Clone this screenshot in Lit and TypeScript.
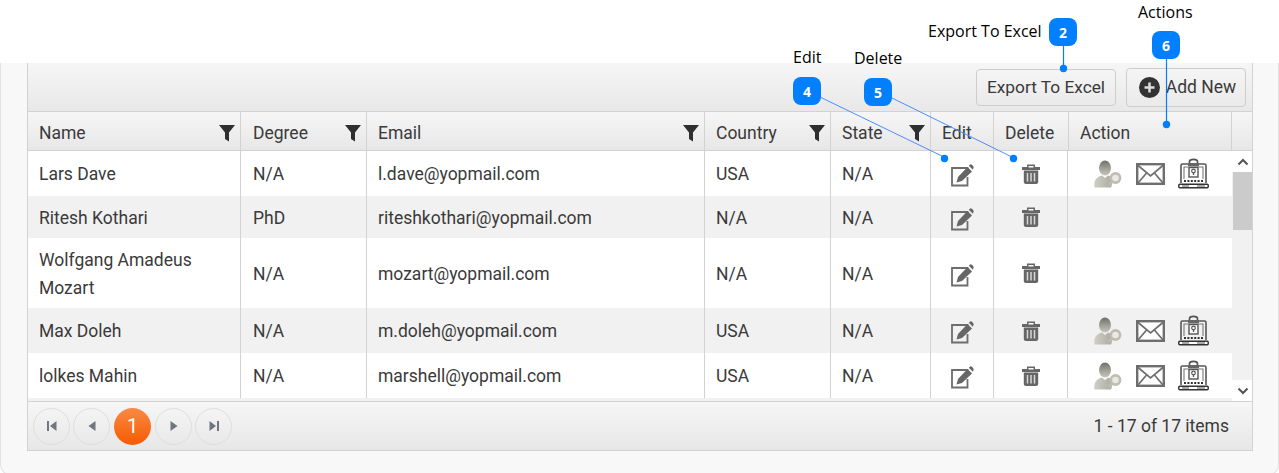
import { LitElement, html, css, svg } from "lit";
import { customElement } from "lit/decorators.js";

const funnel = html`<svg class="funnel" width="16" height="17" viewBox="0 0 16 17"><path d="M0 0H16L10 7.500V16.500L6 14V7.500Z" fill="#2f2f2f"/></svg>`;
const edit = html`<svg class="pen" width="24" height="23" viewBox="0 0 24 23"><path d="M17.500 8V4H2V21.500H17.500V13" fill="none" stroke="#6d6d6d" stroke-width="1.800"/><path d="M6.500 18.500L8 13L17.500 3L22 7.500L12 17Z" fill="#666"/><path d="M18.800 1.800L20.500 .3C21.500 0 24 2.500 23.600 3.800L22.800 5.800Z" fill="#666"/></svg>`;
const trash = html`<svg width="20" height="20" viewBox="0 0 20 20"><path d="M1 3H19V6H1ZM6 3V.5H14V3" fill="#666"/><path d="M7.500 2V3.500H12.500V2Z" fill="#fff"/><path d="M2.800 6.500H17.200V18C17.200 19 16.200 20 15.200 20H4.800C3.800 20 2.800 19 2.800 18Z" fill="#666"/><path d="M6.500 9V17.500M10 9V17.500M13.500 9V17.500" stroke="#d8d8d8" stroke-width="1.500"/></svg>`;
const person = html`<svg width="29" height="28" viewBox="0 0 29 28"><defs><linearGradient id="pg" x1="0" y1="0" x2="0" y2="1"><stop offset="0" stop-color="#6f6f68"/><stop offset=".55" stop-color="#a2a298"/><stop offset="1" stop-color="#c6c6bc"/></linearGradient><linearGradient id="pb" x1="0" y1="0" x2="1" y2="0"><stop offset="0" stop-color="#cfcfc6"/><stop offset="1" stop-color="#a9a99e"/></linearGradient></defs><ellipse cx="11" cy="8" rx="6" ry="7.500" fill="url(#pg)"/><path d="M0.500 27.500C-.5 21 2 17 8 15.500L11 18L14 15.500C16 16 18 17.500 19 20C17.500 22 18.500 25 17 27.500Z" fill="url(#pb)"/><circle cx="21.500" cy="18" r="4.600" fill="#e9e9e4" stroke="#bdbdb2" stroke-width="2.600"/><path d="M18 21.500L15 25" stroke="#bdbdb2" stroke-width="3"/></svg>`;
const mail = html`<svg width="29" height="22" viewBox="0 0 29 22"><rect x="1.200" y="1.200" width="26.600" height="19.600" fill="#fff" stroke="#6e6e6e" stroke-width="2.400"/><path d="M1.500 2L14.500 13L27.500 2M2 20L11 9.500M27 20L18 9.500" fill="none" stroke="#6e6e6e" stroke-width="1.700"/></svg>`;
const lock = html`<svg width="31" height="31" viewBox="0 0 31 31"><path d="M3 25V7.500C3 6.500 3.500 6 4.500 6H26.500C27.500 6 28 6.500 28 7.500V25" fill="none" stroke="#555" stroke-width="1.600"/><path d="M6 21V9H25V21" fill="none" stroke="#777" stroke-width="1.100"/><rect x="10" y="5" width="11" height="8" fill="#fff"/><path d="M11.500 6V3.800C11.500 .5 19.500 .5 19.500 3.800V6" fill="none" stroke="#555" stroke-width="1.700"/><rect x="10" y="5" width="11" height="3.500" fill="#666"/><rect x="11" y="9.500" width="9" height="9.500" fill="#fff" stroke="#555" stroke-width="1.400"/><circle cx="15.500" cy="13" r="1.800" fill="none" stroke="#555" stroke-width="1.200"/><path d="M15.500 14.500V17" stroke="#555" stroke-width="1.300"/><path d="M6 23H25" stroke="#333" stroke-width="2" stroke-dasharray="2 1.400"/><rect x="0.800" y="26.300" width="29.400" height="3.400" rx="1" fill="#fff" stroke="#333" stroke-width="1.500"/><path d="M4 28H11M19 28H27" stroke="#555"/></svg>`;
const chevUp = html`<svg width="12" height="8" viewBox="0 0 12 8"><path d="M1.500 6.500L6 2L10.500 6.500" fill="none" stroke="#555" stroke-width="2"/></svg>`;
const chevDown = html`<svg width="12" height="8" viewBox="0 0 12 8"><path d="M1.500 1.500L6 6L10.500 1.500" fill="none" stroke="#555" stroke-width="2"/></svg>`;

const first = html`<svg width="10" height="10" viewBox="0 0 10 10"><path d="M0 0H2V10H0ZM9.500 0V10L3 5Z" fill="#6f7680"/></svg>`;
const prev = html`<svg width="8" height="10" viewBox="0 0 8 10"><path d="M7.500 0V10L0.500 5Z" fill="#6f7680"/></svg>`;
const next = html`<svg width="8" height="10" viewBox="0 0 8 10"><path d="M.500 0V10L7.500 5Z" fill="#6f7680"/></svg>`;
const last = html`<svg width="10" height="10" viewBox="0 0 10 10"><path d="M8 0H10V10H8ZM.500 0V10L7 5Z" fill="#6f7680"/></svg>`;

type Row = { name: string; degree: string; email: string; country: string; state: string; actions: boolean };
const rows: Row[] = [
  { name: "Lars Dave", degree: "N/A", email: "l.dave@yopmail.com", country: "USA", state: "N/A", actions: true },
  { name: "Ritesh Kothari", degree: "PhD", email: "riteshkothari@yopmail.com", country: "N/A", state: "N/A", actions: false },
  { name: "Wolfgang Amadeus Mozart", degree: "N/A", email: "mozart@yopmail.com", country: "N/A", state: "N/A", actions: false },
  { name: "Max Doleh", degree: "N/A", email: "m.doleh@yopmail.com", country: "USA", state: "N/A", actions: true },
  { name: "lolkes Mahin", degree: "N/A", email: "marshell@yopmail.com", country: "USA", state: "N/A", actions: true },
];

const overlay = svg`
  <g stroke="#4f8dff" fill="none">
    <path d="M821 97.500L946 158" />
    <path d="M892 98L1014 158" />
  </g>
  <g stroke="#007fff" stroke-width="1.200" fill="none">
    <path d="M1063.500 45V69" />
    <path d="M1166.500 58V124" />
  </g>
  <g fill="#007fff">
    <circle cx="1063.500" cy="68.500" r="3.700" />
    <circle cx="1166.500" cy="124.500" r="3.700" />
    <circle cx="944.500" cy="158.500" r="3.700" />
    <circle cx="1013.500" cy="158.500" r="3.700" />
  </g>`;

@customElement("app-root")
export class AppRoot extends LitElement {
  static styles = css`
    :host { display: block; position: relative; height: 473px; overflow: hidden; background: #fff;
      font-family: Roboto, "Liberation Sans", sans-serif; font-size: 17.500px; color: #3a3a3a; }
    * { box-sizing: border-box; }
    svg { display: block; }
    .band { height: 63px; }
    .card { height: 412px; background: #f8f8f8; border: 1px solid #e2e2e2; border-top: 0;
      border-radius: 0 0 10px 10px; padding: 0 25px 0 26px; }
    .grid { width: 1226px; height: 388px; border: 1px solid #d2d2d2; border-top: 0; background: #fff; display: flex; flex-direction: column; }
    .toolbar { height: 49px; flex: none; display: flex; justify-content: flex-end; align-items: center; gap: 10px; padding-right: 6px;
      background: linear-gradient(#f6f6f6, #e9e8e8); border-bottom: 1px solid #d2d2d2; }
    .btn { display: flex; align-items: center; justify-content: center; padding-top: 2px; border: 1px solid #cdcdcd; border-radius: 4px; background: linear-gradient(#f5f5f5, #ebeaea); color: #3a3a3a; line-height: 1; }
    .export { width: 140px; height: 37px; font-size: 17.300px; }
    .add { width: 120px; height: 39px; gap: 6px; padding-left: 3px; }
    .add svg { margin-top: -2px; }
    .row { display: grid; grid-template-columns: 213px 126px 338px 126px 100px 63px 74px 164px; background: #fff; }
    .head { height: 39px; flex: none; background: linear-gradient(#f6f6f6, #e8e7e7); border-bottom: 1px solid #d2d2d2; grid-template-columns: 213px 126px 338px 126px 100px 63px 75px 163px 21px; }
    .hc { display: flex; align-items: center; justify-content: space-between; padding: 4px 5px 0 11px; border-right: 1px solid #d2d2d2; }
    .hc:nth-child(2) { padding-left: 12px; }
    .hc:last-child { border-right: 0; }
    .funnel { flex: none; }
    .body { flex: 1; min-height: 0; display: flex; overflow: hidden; }
    .rows { width: 1204px; flex: none; background: #f1f1f1; }
    .row.alt { background: #f1f1f1; }
    .c { padding: 7px 11px; line-height: 28px; border-right: 1px solid #d2d2d2; display: flex; align-items: center; }
    .c:nth-child(2) { padding-left: 12px; }
    .row.plain .c { padding-top: 8px; padding-bottom: 6px; }
    .row .c.icon { justify-content: center; padding: 7px 0; }
    .pen { margin-top: 4px; }
    .row .c.acts { border-right: 0; padding: 7px 0 7px 26px; gap: 13px; }
    .c.icon svg, .c.acts svg { filter: blur(0.35px); }
    .bar { width: 21px; flex: none; background: #f1f1f1; display: flex; flex-direction: column; align-items: center; }
    .arrow { height: 21px; width: 100%; background: #fff; display: flex; align-items: center; justify-content: center; }
    .thumb { width: 19px; height: 58px; background: #cbcbcb; }
    .spacer { flex: 1; }
    .pager { height: 49px; flex: none; display: flex; align-items: center; justify-content: space-between; padding: 0 23px 0 5px;
      background: linear-gradient(#f6f6f6, #e8e7e7); border-top: 1px solid #d2d2d2; }
    .pages { display: flex; gap: 3px; }
    .pg { width: 37px; height: 37px; border-radius: 50%; border: 1px solid #dedede; display: flex; align-items: center; justify-content: center; }
    .pg.on { border: 0; margin: 0 1px; background: linear-gradient(#f98a45, #f65a00); color: #fff; font-size: 20px; }
    .ann { position: absolute; inset: 0; width: 1279px; height: 473px; pointer-events: none; }
    .badge { position: absolute; width: 28px; height: 28px; border-radius: 8px; background: #007fff; color: #fff; font: 700 14px "Open Sans", sans-serif; display: flex; align-items: center; justify-content: center; }
    .label { position: absolute; font-family: "Open Sans", sans-serif; font-size: 16px; line-height: 20px; color: #000; white-space: nowrap; }
  `;

  private cell(t: string) { return html`<div class="c">${t}</div>`; }

  render() {
    const heads = ["Name", "Degree", "Email", "Country", "State"];
    return html`
      <div class="band"></div>
      <div class="card">
        <div class="grid">
          <div class="toolbar">
            <div class="btn export">Export To Excel</div>
            <div class="btn add">
              <svg width="21" height="21" viewBox="0 0 21 21"><circle cx="10.500" cy="10.500" r="10.500" fill="#333"/><path d="M10.500 5.500V15.500M5.500 10.500H15.500" stroke="#ddd" stroke-width="2.500"/></svg>
              Add New
            </div>
          </div>
          <div class="row head">
            ${heads.map((h) => html`<div class="hc">${h}${funnel}</div>`)}
            <div class="hc">Edit</div><div class="hc">Delete</div><div class="hc">Action</div><div class="hc"></div>
          </div>
          <div class="body">
            <div class="rows">
              ${rows.map((r, i) => html`
                <div class="row ${i % 2 ? "alt" : ""} ${r.actions ? "" : "plain"}">
                  ${this.cell(r.name)}${this.cell(r.degree)}${this.cell(r.email)}${this.cell(r.country)}${this.cell(r.state)}
                  <div class="c icon">${edit}</div>
                  <div class="c icon">${trash}</div>
                  <div class="c acts">${r.actions ? html`${person}${mail}${lock}` : ""}</div>
                </div>`)}
            </div>
            <div class="bar">
              <div class="arrow">${chevUp}</div>
              <div class="thumb"></div>
              <div class="spacer"></div>
              <div class="arrow">${chevDown}</div>
            </div>
          </div>
          <div class="pager">
            <div class="pages">
              <div class="pg">${first}</div><div class="pg">${prev}</div>
              <div class="pg on">1</div>
              <div class="pg">${next}</div><div class="pg">${last}</div>
            </div>
            <div>1 - 17 of 17 items</div>
          </div>
        </div>
      </div>
      <svg class="ann" viewBox="0 0 1279 473">${overlay}</svg>
      <span class="label" style="left:928px;top:21px">Export To Excel</span>
      <span class="label" style="left:1138px;top:2px">Actions</span>
      <span class="label" style="left:793px;top:47px">Edit</span>
      <span class="label" style="left:854px;top:48px">Delete</span>
      <div class="badge" style="left:1049px;top:18px">2</div>
      <div class="badge" style="left:1152px;top:31px">6</div>
      <div class="badge" style="left:793px;top:77px">4</div>
      <div class="badge" style="left:864px;top:78px">5</div>
    `;
  }
}
